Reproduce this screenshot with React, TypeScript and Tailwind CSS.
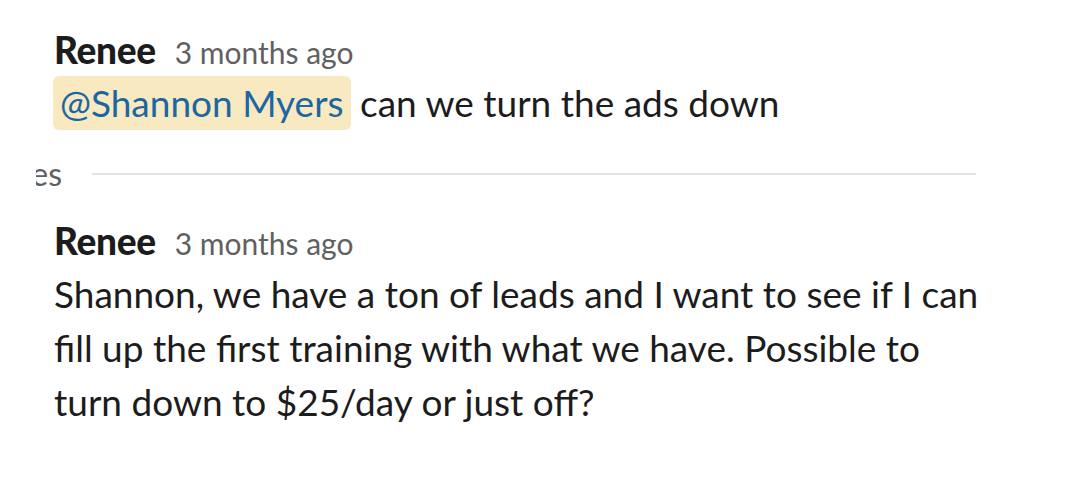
import React from "react";

export default function App() {
  return (
    <div
      className="w-[1080px] h-[500px] bg-white overflow-hidden text-[#1d1c1d]"
      style={{ fontFamily: "Lato, 'Noto Sans', sans-serif" }}
    >
      <div className="pl-[54px] pt-[30px]">
        <div className="flex items-baseline gap-[19px] h-[40px] leading-[40px]">
          <span className="text-[37px] font-black tracking-[-0.3px]">Renee</span>
          <span className="text-[30px] text-[#616061]">3 months ago</span>
        </div>
        <div className="mt-[6px] text-[37px] leading-[54px]">
          <span className="inline-block rounded-[6px] bg-[#f9e9c0] px-[7px] -ml-[1px] text-[#1a67a3]">
            @Shannon Myers
          </span>{" "}
          can we turn the ads down
        </div>
      </div>
      <div className="flex items-center mt-[24px] h-[40px]">
        <div className="ml-[36px] w-[26px] h-[40px] overflow-hidden flex justify-end">
          <span className="text-[32px] leading-[40px] text-[#616061] whitespace-nowrap">es</span>
        </div>
        <div className="ml-[30px] w-[884px] h-[2px] bg-[#e3e3e3]" />
      </div>
      <div className="pl-[54px] mt-[27px]">
        <div className="flex items-baseline gap-[19px] h-[40px] leading-[40px]">
          <span className="text-[37px] font-black tracking-[-0.3px]">Renee</span>
          <span className="text-[30px] text-[#616061]">3 months ago</span>
        </div>
        <div className="mt-[6px] w-[980px] text-[37px] leading-[54px]">
          Shannon, we have a ton of leads and I want to see if I can
          <br />
          fill up the first training with what we have. Possible to
          <br />
          turn down to $25/day or just off?
        </div>
      </div>
    </div>
  );
}
